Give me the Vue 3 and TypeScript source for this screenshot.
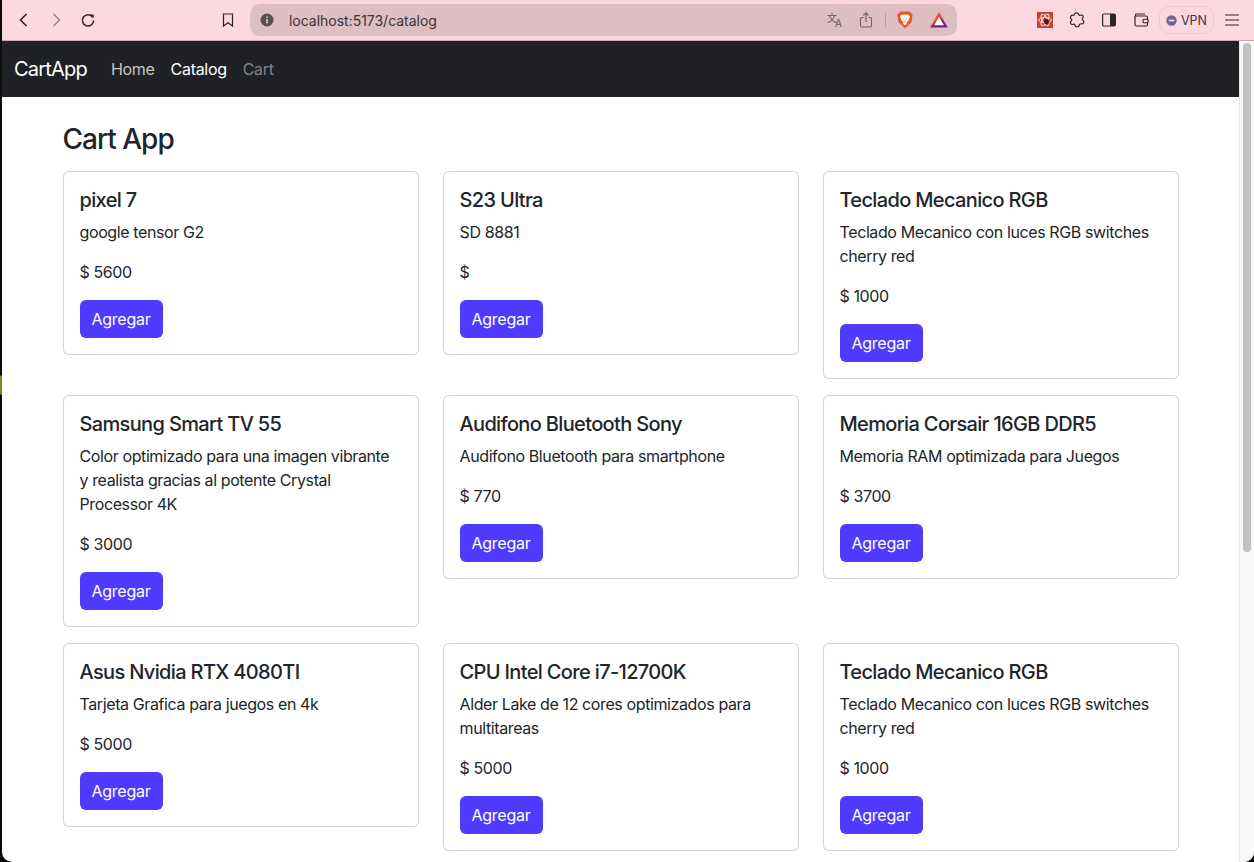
<script setup lang="ts">
interface Product {
  name: string
  description: string
  price: number | null
}

const navs = [
  { text: 'Home', cls: '' },
  { text: 'Catalog', cls: 'active' },
  { text: 'Cart', cls: 'disabled' }
]

const products: Product[] = [
  { name: 'pixel 7', description: 'google tensor G2', price: 5600 },
  { name: 'S23 Ultra', description: 'SD 8881', price: null },
  { name: 'Teclado Mecanico RGB', description: 'Teclado Mecanico con luces RGB switches cherry red', price: 1000 },
  { name: 'Samsung Smart TV 55', description: 'Color optimizado para una imagen vibrante y realista gracias al potente Crystal Processor 4K', price: 3000 },
  { name: 'Audifono Bluetooth Sony', description: 'Audifono Bluetooth para smartphone', price: 770 },
  { name: 'Memoria Corsair 16GB DDR5', description: 'Memoria RAM optimizada para Juegos', price: 3700 },
  { name: 'Asus Nvidia RTX 4080TI', description: 'Tarjeta Grafica para juegos en 4k', price: 5000 },
  { name: 'CPU Intel Core i7-12700K', description: 'Alder Lake de 12 cores optimizados para multitareas', price: 5000 },
  { name: 'Teclado Mecanico RGB', description: 'Teclado Mecanico con luces RGB switches cherry red', price: 1000 }
]
</script>

<template>
  <div class="desktop">
    <div class="window">
      <header class="toolbar">
        <button class="tool">
          <svg width="16" height="16" viewBox="0 0 16 16"><path d="M10.5 2 L4.5 8 L10.5 14" class="line" /></svg>
        </button>
        <button class="tool">
          <svg width="16" height="16" viewBox="0 0 16 16"><path d="M5.5 2 L11.5 8 L5.5 14" class="line muted" /></svg>
        </button>
        <button class="tool">
          <svg width="16" height="16" viewBox="0 0 16 16">
            <path d="M12.6 5.2 A5.6 5.6 0 1 0 13.6 8.4" class="line" />
            <path d="M9.8 2.4 L13.6 2.4 L13.6 6.2 Z" fill="#2b2528" />
          </svg>
        </button>
        <button class="tool bookmark">
          <svg width="16" height="16" viewBox="0 0 16 16"><path d="M3.5 2 H12.5 V14 L8 10.8 L3.5 14 Z" class="line thin" /></svg>
        </button>

        <div class="address">
          <svg class="info" width="14" height="14" viewBox="0 0 14 14">
            <circle cx="7" cy="7" r="6.5" fill="#5b5054" />
            <rect x="6.2" y="6" width="1.7" height="4.4" fill="#dcbec3" />
            <rect x="6.2" y="3.4" width="1.7" height="1.6" fill="#dcbec3" />
          </svg>
          <span class="url">localhost:5173/catalog</span>
          <span class="address-icons">
            <svg class="translate" width="18" height="20" viewBox="0 0 18 20">
              <text x="0" y="12" font-size="10" fill="#5f5559" font-family="'Noto Sans CJK SC', sans-serif">文</text>
              <text x="8" y="17" font-size="10" fill="#5f5559" font-family="Inter, sans-serif">A</text>
            </svg>
            <svg class="share" width="14" height="18" viewBox="0 0 14 18">
              <path d="M4.5 6.5 H3 A1.5 1.5 0 0 0 1.5 8 V14.5 A1.5 1.5 0 0 0 3 16 H11 A1.5 1.5 0 0 0 12.5 14.5 V8 A1.5 1.5 0 0 0 11 6.5 H9.5" fill="none" stroke="#6b6165" stroke-width="1.1" />
              <path d="M7 11 V2 M4.4 4.4 L7 1.8 L9.6 4.4" fill="none" stroke="#6b6165" stroke-width="1.1" />
            </svg>
            <span class="divider"></span>
            <svg class="brave" width="16" height="18" viewBox="0 0 16 18">
              <path d="M3.6 0.5 H12.4 L15.6 3.6 L14.6 11 L8 17.6 L1.4 11 L0.4 3.6 Z" fill="#f1561f" />
              <path d="M4.2 4 L6.6 3.4 H9.4 L11.8 4 L13 5.6 L11.4 9.4 L9.8 11 V13 L8 14.2 L6.2 13 V11 L4.6 9.4 L3 5.6 Z" fill="#fff" />
              <path d="M6.4 7.6 L7.4 8.6 M9.6 7.6 L8.6 8.6 M8 10 V11.6" stroke="#f1561f" stroke-width="0.9" fill="none" />
            </svg>
            <svg class="bat" width="18" height="16" viewBox="0 0 18 16">
              <path d="M9 0.5 L17.8 15.5 H0.2 Z" fill="#7a1b8c" />
              <path d="M9 0.5 L13.4 8 L9 6 L4.6 11 L0.2 15.5 Z" fill="#f2541c" />
              <path d="M9 5 L14 13.2 H4 Z" fill="#fff" />
            </svg>
          </span>
        </div>

        <div class="extensions">
          <button class="tool">
            <svg width="16" height="16" viewBox="0 0 16 16">
              <rect width="16" height="16" fill="#c8412f" />
              <g fill="none" stroke="#fbdcd6" stroke-width="1">
                <ellipse cx="8" cy="8" rx="6.4" ry="2.6" />
                <ellipse cx="8" cy="8" rx="6.4" ry="2.6" transform="rotate(60 8 8)" />
                <ellipse cx="8" cy="8" rx="6.4" ry="2.6" transform="rotate(120 8 8)" />
              </g>
              <circle cx="9.4" cy="9.6" r="2.6" fill="#3a1d18" />
            </svg>
          </button>
          <button class="tool">
            <svg width="16" height="16" viewBox="0 0 16 16">
              <path d="M5.4 2.6 C5.8 0.4 9.2 0.4 9.8 2.6 C10 3.4 10.8 3.6 11.6 3.2 C13.6 2.4 15 4.4 13.6 6 C13 6.8 13 7.4 13.8 8 C15.8 9.4 14.6 12.4 12.2 11.8 C11.2 11.6 10.6 12 10.4 13 C9.8 15.4 6.8 15.2 6 13.2 C5.6 12.2 5 12 4 12.4 C1.8 13 0.6 10.4 2.2 9 C3 8.2 3 7.4 2.2 6.8 C0.6 5.2 2 2.8 4 3.2 C4.8 3.4 5.2 3.2 5.4 2.6 Z" class="line thin" />
            </svg>
          </button>
          <button class="tool">
            <svg width="16" height="14" viewBox="0 0 16 14">
              <rect x="1.6" y="1" width="12.8" height="12" rx="1.5" class="line thin" />
              <path d="M9 1 H13 A1.5 1.5 0 0 1 14.5 2.5 V11.5 A1.5 1.5 0 0 1 13 13 H9 Z" fill="#2b2528" />
            </svg>
          </button>
          <button class="tool">
            <svg width="16" height="14" viewBox="0 0 16 14">
              <path d="M2 3 V11.5 A1.5 1.5 0 0 0 3.5 13 H13 A1.5 1.5 0 0 0 14.5 11.5 V4.5 A1.5 1.5 0 0 0 13 3 H3 A1.2 1.2 0 0 1 3 1 H12" class="line thin" />
              <rect x="10" y="6.2" width="5" height="3.6" rx="1" fill="#fdd8e0" stroke="#2b2528" stroke-width="1.1" />
            </svg>
          </button>
          <div class="vpn">
            <svg width="11" height="11" viewBox="0 0 11 11">
              <circle cx="5.5" cy="5.5" r="5.2" fill="#6b6a92" />
              <rect x="2.8" y="4.7" width="5.4" height="1.6" fill="#fdd8e0" />
            </svg>
            <span>VPN</span>
          </div>
          <button class="tool">
            <svg width="16" height="14" viewBox="0 0 16 14">
              <path d="M1 2 H15 M1 7 H15 M1 12 H15" class="line thin" />
            </svg>
          </button>
        </div>
      </header>

      <div class="viewport">
        <main class="page">
          <nav class="navbar">
            <a class="brand">CartApp</a>
            <ul class="nav-list">
              <li v-for="item in navs" :key="item.text">
                <a class="nav-link" :class="item.cls">{{ item.text }}</a>
              </li>
            </ul>
          </nav>

          <div class="container">
            <h3 class="heading">Cart App</h3>
            <div class="grid">
              <article v-for="(product, i) in products" :key="i" class="card">
                <h5 class="card-title">{{ product.name }}</h5>
                <p class="card-text">{{ product.description }}</p>
                <p class="card-text">$ {{ product.price }}</p>
                <button class="btn">Agregar</button>
              </article>
            </div>
          </div>
        </main>

        <div class="scrollbar">
          <div class="thumb"></div>
        </div>
      </div>
    </div>
  </div>
</template>

<style>
html,
body {
  margin: 0;
  height: 100%;
  overflow: hidden;
  background: #000;
}
</style>

<style scoped>
.desktop {
  width: 1254px;
  height: 862px;
  padding-left: 2px;
  box-sizing: border-box;
  background: linear-gradient(to bottom, #0a0a0a 375px, #6f8f1a 376px, #6f8f1a 394px, #0a0a0a 395px);
  font-family: Inter, "Liberation Sans", sans-serif;
  color: #212529;
}

.window {
  height: 100%;
  display: flex;
  flex-direction: column;
  background: #fff;
  border-radius: 0 0 10px 10px;
  overflow: hidden;
}

.toolbar {
  height: 40px;
  flex-shrink: 0;
  display: flex;
  align-items: center;
  padding-left: 6px;
  background: #fdd8e0;
  border-bottom: 1px solid #c9adb3;
}

.tool {
  width: 32px;
  height: 32px;
  padding: 0;
  border: 0;
  background: transparent;
  display: flex;
  align-items: center;
  justify-content: center;
}

.line {
  fill: none;
  stroke: #2b2528;
  stroke-width: 1.6;
}

.line.muted {
  stroke: #95878b;
}

.line.thin {
  stroke-width: 1.2;
}

.bookmark {
  margin-left: 108px;
}

.address {
  width: 707px;
  height: 32px;
  margin-left: 6px;
  padding-left: 10px;
  box-sizing: border-box;
  display: flex;
  align-items: center;
  background: #dcbec3;
  border-radius: 10px;
}

.url {
  margin-left: 15px;
  font-size: 14px;
  letter-spacing: -0.02px;
  color: #3b3337;
}

.address-icons {
  margin-left: auto;
  display: flex;
  align-items: center;
}

.share {
  margin-left: 14px;
}

.divider {
  width: 1px;
  height: 16px;
  margin: 0 11px 0 12px;
  background: #b5a2a6;
}

.bat {
  margin: 0 9px 0 17px;
}

.extensions {
  margin-left: 72px;
  display: flex;
  align-items: center;
}

.vpn {
  width: 55px;
  height: 28px;
  margin: 0 2px;
  box-sizing: border-box;
  display: flex;
  align-items: center;
  justify-content: center;
  gap: 4px;
  border: 1px solid #f3c8d2;
  border-radius: 10px;
  font-size: 12.5px;
  color: #3a3337;
}

.viewport {
  flex: 1;
  display: flex;
  min-height: 0;
}

.page {
  flex: 1;
  min-width: 0;
  overflow: hidden;
}

.navbar {
  height: 56px;
  display: flex;
  align-items: center;
  padding-left: 12px;
  background: #202125;
}

.brand {
  margin-right: 16px;
  font-size: 20px;
  letter-spacing: -0.8px;
  color: #fff;
}

.nav-list {
  display: flex;
  margin: 0;
  padding: 0;
  list-style: none;
}

.nav-link {
  display: block;
  padding: 8px;
  font-size: 16px;
  line-height: 24px;
  letter-spacing: -0.3px;
  color: rgba(255, 255, 255, 0.75);
}

.nav-link.active {
  color: #fff;
}

.nav-link.disabled {
  color: rgba(255, 255, 255, 0.45);
}

.container {
  width: 1116px;
  margin: 0 auto;
}

.heading {
  margin: 25px 0 15px;
  font-size: 28px;
  font-weight: 500;
  line-height: 34px;
  letter-spacing: -1px;
}

.grid {
  display: grid;
  grid-template-columns: repeat(3, 356px);
  column-gap: 24px;
  row-gap: 16px;
  align-items: start;
}

.card {
  padding: 16px;
  background: #fff;
  border: 1px solid rgba(0, 0, 0, 0.175);
  border-radius: 6px;
}

.card-title {
  margin: 0 0 8px;
  font-size: 20px;
  font-weight: 500;
  line-height: 24px;
  letter-spacing: -0.65px;
}

.card-text {
  margin: 0 0 16px;
  font-size: 16px;
  line-height: 24px;
  letter-spacing: -0.39px;
}

.btn {
  display: block;
  height: 38px;
  padding: 0 12px;
  border: 0;
  border-radius: 6px;
  background: #4f3bff;
  color: #fff;
  font-family: inherit;
  font-size: 16px;
  letter-spacing: -0.25px;
}

.scrollbar {
  width: 15px;
  flex-shrink: 0;
  box-sizing: border-box;
  padding: 2px 3px 0 3px;
  background: #f7f7f7;
  border-left: 1px solid #e6e6e6;
}

.thumb {
  height: 509px;
  border-radius: 4px;
  background: #c1c1c1;
}
</style>
